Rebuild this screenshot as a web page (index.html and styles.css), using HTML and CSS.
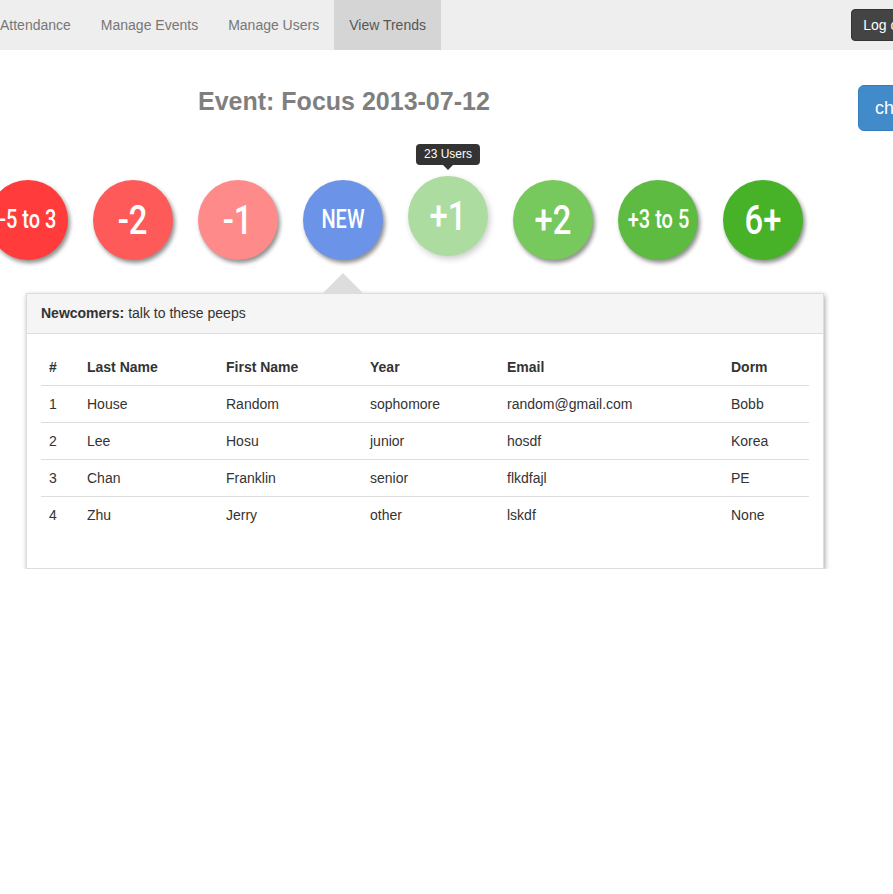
FILE: index.html
```html
<!DOCTYPE html>
<html>
<head>
<meta charset="utf-8">
<link rel="stylesheet" href="styles.css">
</head>
<body>
<div class="page">
  <nav class="navbar">
    <ul class="nav">
      <li><a>Attendance</a></li>
      <li><a>Manage Events</a></li>
      <li><a>Manage Users</a></li>
      <li class="active"><a>View Trends</a></li>
    </ul>
    <button class="logout">Log out</button>
  </nav>
  <div class="main">
    <div class="content">
      <h3 class="title">Event: Focus 2013-07-12</h3>
      <div class="circles">
        <div class="circle c-m5"><span class="small">-5 to 3</span></div>
        <div class="circle c-m2"><span>-2</span></div>
        <div class="circle c-m1"><span>-1</span></div>
        <div class="circle c-new"><span class="small">NEW</span></div>
        <div class="circle c-p1 lifted"><span>+1</span><div class="tip">23 Users</div></div>
        <div class="circle c-p2"><span>+2</span></div>
        <div class="circle c-p3"><span class="small">+3 to 5</span></div>
        <div class="circle c-p6"><span>6+</span></div>
      </div>
      <div class="panel">
        <div class="caret"></div>
        <div class="panel-heading"><b>Newcomers:</b> talk to these peeps</div>
        <div class="panel-body">
          <table class="table">
            <thead>
              <tr><th class="w1">#</th><th class="w2">Last Name</th><th class="w3">First Name</th><th class="w4">Year</th><th class="w5">Email</th><th class="w6">Dorm</th></tr>
            </thead>
            <tbody>
              <tr><td>1</td><td>House</td><td>Random</td><td>sophomore</td><td>random@gmail.com</td><td>Bobb</td></tr>
              <tr><td>2</td><td>Lee</td><td>Hosu</td><td>junior</td><td>hosdf</td><td>Korea</td></tr>
              <tr><td>3</td><td>Chan</td><td>Franklin</td><td>senior</td><td>flkdfajl</td><td>PE</td></tr>
              <tr><td>4</td><td>Zhu</td><td>Jerry</td><td>other</td><td>lskdf</td><td>None</td></tr>
            </tbody>
          </table>
        </div>
      </div>
    </div>
    <div class="side">
      <button class="btn-primary">change event</button>
    </div>
  </div>
</div>
</body>
</html>
```

FILE: styles.css
```css
html, body {
  margin: 0;
  padding: 0;
  overflow: hidden;
  background: #fff;
}
body {
  font-family: "Liberation Sans", Arial, sans-serif;
  font-size: 14px;
  line-height: 20px;
  color: #333;
}
.page {
  width: 1000px;
  margin-left: -15px;
}
.navbar {
  display: flex;
  align-items: center;
  height: 50px;
  background: #eeeeee;
  padding-right: 63px;
}
.nav {
  display: flex;
  list-style: none;
  margin: 0;
  padding: 0;
  height: 50px;
}
.nav li a {
  display: block;
  padding: 15px 15px;
  color: #777;
}
.nav li.active a {
  background: #d5d5d5;
  color: #555;
}
.logout {
  margin-left: auto;
  font-family: "Liberation Sans", Arial, sans-serif;
  font-size: 14px;
  line-height: 20px;
  color: #fff;
  background: #444;
  border: 1px solid #333;
  border-radius: 4px;
  padding: 5px 11px;
  white-space: nowrap;
}
.main {
  display: flex;
}
.content {
  width: 841px;
  margin-left: 3px;
  flex-shrink: 0;
}
.side {
  margin-left: 29px;
  padding-top: 35px;
}
.btn-primary {
  font-family: "Liberation Sans", Arial, sans-serif;
  font-size: 18px;
  line-height: 24px;
  padding: 10px 16px;
  color: #fff;
  background: #428bca;
  border: 1px solid #357ebd;
  border-radius: 6px;
  white-space: nowrap;
}
.title {
  margin: 38px 0 0 210px;
  font-size: 25px;
  line-height: 27px;
  font-weight: bold;
  color: #7f7f7f;
}
.circles {
  display: flex;
  gap: 25px;
  margin-top: 65px;
}
.circle {
  position: relative;
  width: 80px;
  height: 80px;
  border-radius: 50%;
  display: flex;
  align-items: center;
  justify-content: center;
  color: #fff;
  font-family: Roboto, "Liberation Sans", sans-serif;
  font-weight: 500;
  font-size: 41px;
  box-shadow: 2px 3px 4px rgba(0, 0, 0, 0.45);
  flex-shrink: 0;
}
.circle span {
  display: inline-block;
  transform: scaleX(0.8);
  white-space: nowrap;
}
.circle span.small {
  font-size: 25px;
}
.circle.lifted {
  transform: translateY(-4px);
  box-shadow: 2px 3px 6px rgba(0, 0, 0, 0.2);
}
.c-m5 { background: #ff3b3b; }
.c-m2 { background: #ff5a5a; }
.c-m1 { background: #ff8a8a; }
.c-new { background: #6b94e8; }
.c-p1 { background: #acdca0; }
.c-p2 { background: #77c85d; }
.c-p3 { background: #5dbb41; }
.c-p6 { background: #47b228; }
.tip {
  position: absolute;
  bottom: calc(100% + 11px);
  left: 50%;
  transform: translateX(-50%);
  background: #333;
  color: #fff;
  font-family: "Liberation Sans", Arial, sans-serif;
  font-weight: normal;
  font-size: 12px;
  line-height: 15px;
  padding: 3px 8px;
  border-radius: 4px;
  white-space: nowrap;
}
.tip::after {
  content: "";
  position: absolute;
  top: 100%;
  left: 50%;
  margin-left: -5px;
  border-left: 5px solid transparent;
  border-right: 5px solid transparent;
  border-top: 5px solid #333;
}
.panel {
  position: relative;
  margin: 33px 0 0 38px;
  width: 798px;
  box-sizing: border-box;
  border: 1px solid #ddd;
  background: #fff;
  box-shadow: 1px 2px 5px rgba(0, 0, 0, 0.35);
}
.caret {
  position: absolute;
  top: -21px;
  left: 296px;
  border-left: 20px solid transparent;
  border-right: 20px solid transparent;
  border-bottom: 20px solid #dddddd;
}
.panel-heading {
  background: #f5f5f5;
  border-bottom: 1px solid #ddd;
  padding: 9px 14px 10px;
  color: #333;
}
.panel-body {
  padding: 15px 15px 15px 14px;
}
.table {
  width: 100%;
  border-collapse: collapse;
  margin-bottom: 20px;
  table-layout: fixed;
}
.table th, .table td {
  padding: 8px;
  text-align: left;
  line-height: 20px;
}
.table th {
  font-weight: bold;
  border-bottom: 1px solid #ddd;
}
.table td {
  border-top: 1px solid #ddd;
}
.table tbody tr:first-child td {
  border-top: 0;
}
.w1 { width: 22px; }
.w2 { width: 123px; }
.w3 { width: 128px; }
.w4 { width: 121px; }
.w5 { width: 208px; }
.w6 { width: 70px; }
```
